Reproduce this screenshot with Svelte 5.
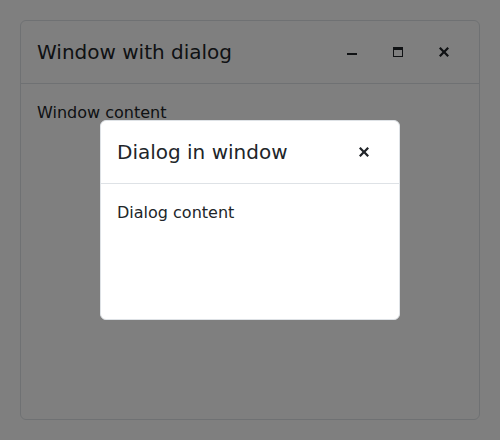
<script>
  let content = 'Window content';
  let dialogContent = 'Dialog content';
</script>

{#snippet close()}
  <svg width="16" height="16" viewBox="0 0 16 16"><path d="M13 4.6 11.4 3 8 6.4 4.6 3 3 4.6 6.4 8 3 11.4 4.6 13 8 9.6 11.4 13 13 11.4 9.6 8z" fill="currentColor" /></svg>
{/snippet}

<div class="page">
  <section class="window">
    <header>
      <h5>Window with dialog</h5>
      <div class="actions">
        <button aria-label="Minimize"><svg width="16" height="16" viewBox="0 0 16 16"><path d="M3 9h10v2H3z" fill="currentColor" /></svg></button>
        <button aria-label="Maximize"><svg width="16" height="16" viewBox="0 0 16 16"><path d="M3 3v10h10V3zm9 9H4V6h8z" fill="currentColor" /></svg></button>
        <button aria-label="Close">{@render close()}</button>
      </div>
    </header>
    <div class="content">{content}</div>
  </section>
  <div class="overlay">
    <section class="window dialog">
      <header>
        <h5>Dialog in window</h5>
        <div class="actions">
          <button aria-label="Close dialog">{@render close()}</button>
        </div>
      </header>
      <div class="content">{dialogContent}</div>
    </section>
  </div>
</div>

<style>
  .page {
    position: relative;
    box-sizing: border-box;
    height: 440px;
    padding: 20px;
    background: #fff;
    font: 16px/24px "DejaVu Sans", sans-serif;
    color: #212529;
  }
  .window {
    box-sizing: border-box;
    width: 460px;
    height: 400px;
    border: 1px solid #dee2e6;
    border-radius: 6px;
    background: #fff;
  }
  .dialog {
    width: 300px;
    height: 200px;
  }
  .overlay {
    position: absolute;
    inset: 0;
    display: flex;
    align-items: center;
    justify-content: center;
    background: rgba(0, 0, 0, 0.5);
  }
  header {
    box-sizing: border-box;
    display: flex;
    align-items: center;
    height: 63px;
    padding: 0 16px;
    border-bottom: 1px solid #dee2e6;
  }
  h5 {
    flex: 1;
    margin: 0;
    font-size: 20px;
    font-weight: 400;
    line-height: 30px;
  }
  .actions {
    display: flex;
    gap: 8px;
  }
  button {
    display: flex;
    align-items: center;
    justify-content: center;
    width: 38px;
    height: 38px;
    padding: 0;
    border: 0;
    background: none;
    color: inherit;
  }
  .content {
    padding: 17px 16px 16px;
  }
</style>
